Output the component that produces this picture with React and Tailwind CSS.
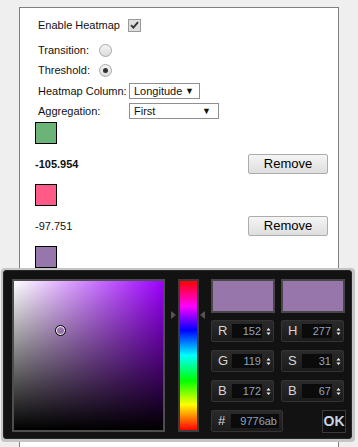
import React from 'react'

function Checkbox() {
  return (
    <div className="flex h-[13px] w-[13px] items-center justify-center border border-[#9a9a9a] bg-[#dedede]">
      <svg width="9" height="8" viewBox="0 0 9 8">
        <path d="M1 4.2 L3.4 6.6 L8 1.2" stroke="#333" strokeWidth="1.8" fill="none" />
      </svg>
    </div>
  )
}

function Radio({ checked }) {
  return (
    <div className="flex h-[13px] w-[13px] items-center justify-center rounded-full border border-[#a8a8a8] bg-gradient-to-b from-[#f4f4f4] to-[#dcdcdc]">
      {checked && <div className="h-[5px] w-[5px] rounded-full bg-[#333]" />}
    </div>
  )
}

function Select({ value, className }) {
  return (
    <div
      className={`flex h-[16px] items-center justify-between border border-[#8f8f8f] bg-white pl-[4px] text-[11px] ${className}`}
    >
      <span>{value}</span>
      <span className="text-[9px] leading-none">▼</span>
    </div>
  )
}

function Swatch({ color }) {
  return <div className={`h-[22px] w-[22px] border border-black ${color}`} />
}

function RemoveButton() {
  return (
    <button className="flex h-[20px] w-[80px] items-center justify-center rounded-[2px] border border-[#acacac] bg-gradient-to-b from-[#f5f5f5] to-[#dedede] text-[13px] text-black">
      Remove
    </button>
  )
}

function Spinner() {
  return (
    <svg width="5" height="9" viewBox="0 0 5 9" className="ml-[4px]">
      <path d="M0.5 3.5 L2.5 1 L4.5 3.5 Z" fill="#f0f0f0" />
      <path d="M0.5 5.5 L2.5 8 L4.5 5.5 Z" fill="#f0f0f0" />
    </svg>
  )
}

function Field({ label, value }) {
  return (
    <div className="flex h-[22px] items-center rounded-[2px] border border-[#333] bg-gradient-to-b from-[#2a2a2a] to-[#1b1b1b] pl-[6px]">
      <span className="w-[14px] text-[13px] text-[#d6d6d6]">{label}</span>
      <div className="h-[14px] w-[30px] bg-[#0b0b0b] pr-[1px] text-right text-[11px] leading-[14px] text-[#8ea5bf]">
        {value}
      </div>
      <Spinner />
    </div>
  )
}

export default function App() {
  return (
    <div className="relative h-[447px] w-[358px] overflow-hidden bg-[#efefef] font-['Liberation_Sans',Arial,sans-serif] text-[11px] text-[#111]">
      {/* Heatmap panel */}
      <div className="ml-[19px] mt-[7px] h-[480px] w-[320px] border border-[#7f7f7f] bg-white pl-[15px] pr-[10px] pt-[7px]">
        <div className="ml-[3px] flex h-[20px] items-center">
          <span>Enable Heatmap</span>
          <div className="ml-[8px]">
            <Checkbox />
          </div>
        </div>
        <div className="ml-[3px] mt-[5px] flex h-[20px] items-center">
          <span className="w-[61px]">Transition:</span>
          <Radio />
        </div>
        <div className="ml-[3px] flex h-[20px] items-center">
          <span className="w-[61px]">Threshold:</span>
          <Radio checked />
        </div>
        <div className="ml-[3px] mt-[1px] flex h-[20px] items-center">
          <span className="w-[91px]">Heatmap Column:</span>
          <Select value="Longitude" className="w-[71px] pr-[5px]" />
        </div>
        <div className="ml-[3px] flex h-[20px] items-center">
          <span className="w-[91px]">Aggregation:</span>
          <Select value="First" className="w-[90px] pr-[7px]" />
        </div>

        <div className="mt-[1px]">
          <Swatch color="bg-[#6bb377]" />
        </div>
        <div className="mt-[10px] flex h-[20px] items-center justify-between">
          <span className="font-bold">-105.954</span>
          <RemoveButton />
        </div>
        <div className="mt-[10px]">
          <Swatch color="bg-[#ff5a88]" />
        </div>
        <div className="mt-[10px] flex h-[20px] items-center justify-between">
          <span>-97.751</span>
          <RemoveButton />
        </div>
        <div className="mt-[10px]">
          <Swatch color="bg-[#9776ab]" />
        </div>
      </div>

      {/* Color picker popup */}
      <div className="absolute left-[1px] top-[268px] rounded-[4px] bg-[#c4c4c4] pb-[3px] pl-[2px] pr-[3px] pt-[2px]">
        <div className="flex h-[169px] w-[349px] rounded-[3px] border border-[#262626] bg-[#121212] pl-[8px] pt-[8px]">
          <div className="relative h-[153px] w-[153px] border-2 border-[#4d4d4d] bg-[image:linear-gradient(to_top,#000,transparent),linear-gradient(to_right,#fff,#9d00ff)]">
            <div className="absolute left-[41px] top-[44px] h-[11px] w-[11px] rounded-full border border-black shadow-[inset_0_0_0_1px_#fff]" />
          </div>
          <div className="relative ml-[13px] h-[153px] w-[21px] border-2 border-[#3c3c3c] bg-[image:linear-gradient(to_bottom,#f00_0%,#f0f_17%,#00f_33%,#0ff_50%,#0f0_67%,#ff0_83%,#f00_100%)]">
            <div className="absolute left-[-9px] top-[30px] h-0 w-0 border-y-[4px] border-l-[5px] border-y-transparent border-l-[#555]" />
            <div className="absolute left-[20px] top-[30px] h-0 w-0 border-y-[4px] border-r-[5px] border-y-transparent border-r-[#555]" />
          </div>
          <div className="ml-[12px] w-[134px]">
            <div className="flex gap-[6px]">
              <div className="h-[34px] w-[64px] border-2 border-[#484848] bg-[#9776ab]" />
              <div className="h-[34px] w-[64px] border-2 border-[#484848] bg-[#9776ab]" />
            </div>
            <div className="mt-[7px] grid grid-cols-[63px_63px] gap-x-[7px] gap-y-[8px]">
              <Field label="R" value="152" />
              <Field label="H" value="277" />
              <Field label="G" value="119" />
              <Field label="S" value="31" />
              <Field label="B" value="172" />
              <Field label="B" value="67" />
            </div>
            <div className="mt-[8px] flex items-start">
              <div className="flex h-[22px] w-[72px] items-center rounded-[2px] border border-[#333] bg-gradient-to-b from-[#2a2a2a] to-[#1b1b1b] pl-[6px]">
                <span className="w-[13px] text-[13px] text-[#d6d6d6]">#</span>
                <div className="h-[14px] w-[48px] bg-[#0b0b0b] pr-[2px] text-right text-[11px] leading-[14px] text-[#8ea5bf]">
                  9776ab
                </div>
              </div>
              <button className="-mr-[1px] ml-auto flex h-[23px] w-[24px] items-center justify-center border border-[#3a3a3a] bg-[#0e0e0e] text-[14px] font-bold text-[#c9d3e0]">
                OK
              </button>
            </div>
          </div>
        </div>
      </div>
    </div>
  )
}
